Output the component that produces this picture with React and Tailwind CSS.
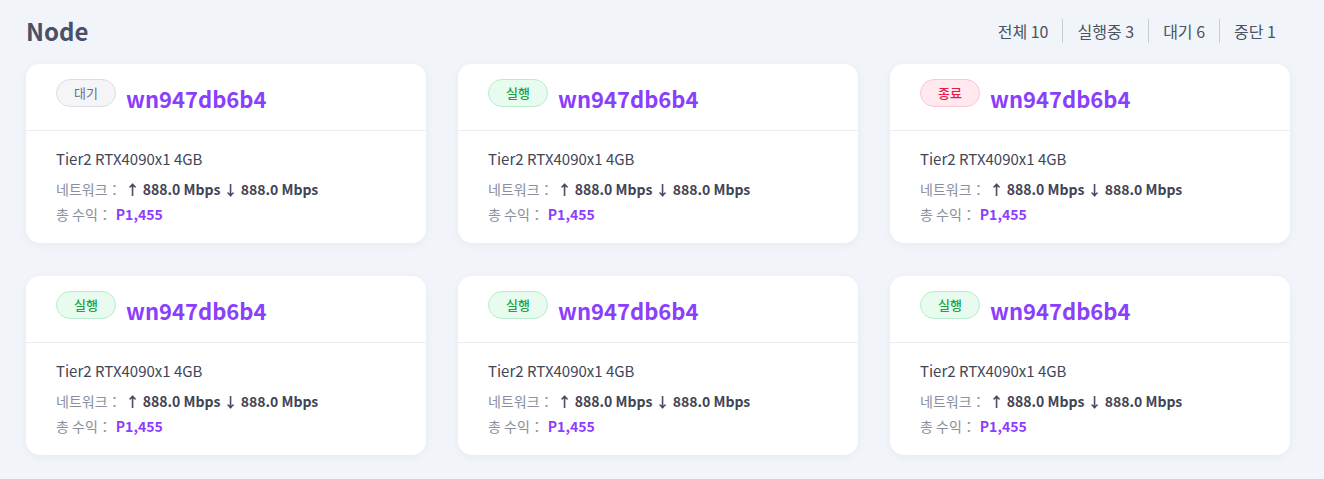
import React from 'react'

const font = { fontFamily: '"Noto Sans CJK KR", "Noto Sans", sans-serif' }

const nodes = [
  { id: 1, status: 'wait', name: 'wn947db6b4' },
  { id: 2, status: 'run', name: 'wn947db6b4' },
  { id: 3, status: 'end', name: 'wn947db6b4' },
  { id: 4, status: 'run', name: 'wn947db6b4' },
  { id: 5, status: 'run', name: 'wn947db6b4' },
  { id: 6, status: 'run', name: 'wn947db6b4' },
]

const stats = [
  { label: '전체', value: 10 },
  { label: '실행중', value: 3 },
  { label: '대기', value: 6 },
  { label: '중단', value: 1 },
]

// Status badge
const Badge = ({ status }) => {
  if (status === 'run') {
    return (
      <span className="flex h-[28px] w-[60px] shrink-0 items-center justify-center rounded-full border border-[#b9eccb] bg-[#e7fbef] text-[13px] font-medium text-[#16a34a]">
        실행
      </span>
    )
  }
  if (status === 'end') {
    return (
      <span className="flex h-[28px] w-[60px] shrink-0 items-center justify-center rounded-full border border-[#fbc5d2] bg-[#ffe9ef] text-[13px] font-medium text-[#e11d48]">
        종료
      </span>
    )
  }
  return (
    <span className="flex h-[28px] w-[60px] shrink-0 items-center justify-center rounded-full border border-[#dcdde8] bg-[#f5f5f8] text-[13px] text-[#6b6e80]">
      대기
    </span>
  )
}

const NodeCard = ({ node }) => (
  <div className="w-[400px] rounded-[14px] bg-white shadow-[0_2px_8px_rgba(30,40,80,0.05)]">
    <div className="flex items-start gap-[10px] border-b border-[#ececf1] px-[30px] py-[15px]">
      <Badge status={node.status} />
      <span className="mt-[1px] h-[35px] text-[22px] leading-[36px] font-bold text-[#8a3ffc]">{node.name}</span>
    </div>
    <div className="px-[30px] pt-[16px] pb-[16px]">
      <div className="text-[15px] leading-[24px] text-[#3f4557]">Tier2 RTX4090x1 4GB</div>
      <div className="mt-[6px] text-[14px] leading-[25px] text-[#8a8e9e]">
        네트워크：
        <span className="ml-[4px] font-bold text-[#3f4557]">↑ 888.0 Mbps ↓ 888.0 Mbps</span>
      </div>
      <div className="text-[14px] leading-[25px] text-[#8a8e9e]">
        총 수익：
        <span className="ml-[4px] font-bold text-[#8a3ffc]">P1,455</span>
      </div>
    </div>
  </div>
)

export default function App() {
  return (
    <div className="min-h-[479px] w-full bg-[#f1f4f9] pl-[26px] pr-[34px] pt-[14px] pb-[24px]" style={font}>
      <div className="mb-[16px] flex h-[34px] items-center justify-between">
        <h1 className="text-[24px] leading-[34px] font-bold text-[#4a5068]">Node</h1>
        <div className="flex items-center">
          {stats.map((s, i) => (
            <div
              key={s.label}
              className={
                i === 0
                  ? 'px-[14px] text-[16px] leading-[24px] text-[#4b5263]'
                  : 'border-l border-[#c9cdd5] px-[14px] text-[16px] leading-[24px] text-[#4b5263]'
              }
            >
              {s.label} {s.value}
            </div>
          ))}
        </div>
      </div>

      <div className="grid grid-cols-[400px_400px_400px] gap-x-[32px] gap-y-[33px]">
        {nodes.map(n => (
          <NodeCard key={n.id} node={n} />
        ))}
      </div>
    </div>
  )
}
